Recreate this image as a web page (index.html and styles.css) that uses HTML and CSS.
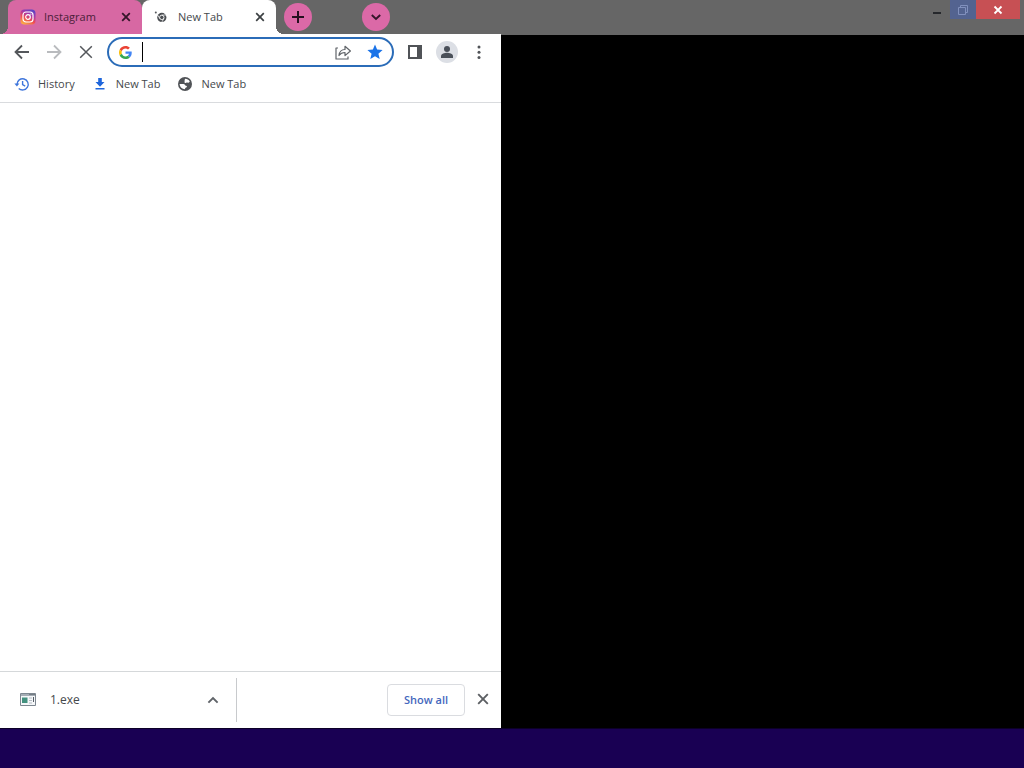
FILE: index.html
```
<!doctype html>
<html lang="en">
<head>
<meta charset="utf-8">
<title>New Tab</title>
<link rel="stylesheet" href="styles.css">
</head>

<body>
<header class="titlebar">
	<div class="tabs">
		<div class="tab tab-pink">
			<svg class="icon" viewBox="0 0 16 16">
				<defs>
					<linearGradient id="insta" x1="0.2" y1="1" x2="0.7" y2="0">
						<stop offset="0" stop-color="#fbb540"/>
						<stop offset="0.4" stop-color="#ee4b52"/>
						<stop offset="0.7" stop-color="#a837a8"/>
						<stop offset="1" stop-color="#5b45c4"/>
					</linearGradient>
				</defs>
				<rect x="0.5" y="0.5" width="15" height="15" rx="4" fill="url(#insta)"/>
				<rect x="3" y="3" width="10" height="10" rx="3" fill="none" stroke="#fff" stroke-width="1.2"/>
				<circle cx="8" cy="8" r="2.3" fill="none" stroke="#fff" stroke-width="1.2"/>
				<circle cx="10.9" cy="5.1" r="0.7" fill="#fff"/>
			</svg>
			<span class="tab-title">Instagram</span>
			<button class="tab-close" aria-label="Close tab"><svg viewBox="0 0 10 10"><path d="M1.2 1.2l7.6 7.6M8.8 1.2L1.2 8.8" stroke="#35152a" stroke-width="1.8"/></svg></button>
		</div>
		<div class="tab tab-active">
			<svg class="icon" viewBox="0 0 16 16">
				<circle cx="1.8" cy="3.6" r="1" fill="#55585c"/>
				<circle cx="7.8" cy="8.4" r="4.6" fill="#4b4e52"/>
				<circle cx="7.8" cy="8.4" r="2.2" fill="#4b4e52" stroke="#fff" stroke-width="0.9"/>
				<path d="M7.8 6h4.4M5.8 9.6L3.6 6M9.9 9.6l-2.2 3.6" stroke="#fff" stroke-width="0.7"/>
			</svg>
			<span class="tab-title">New Tab</span>
			<button class="tab-close" aria-label="Close tab"><svg viewBox="0 0 10 10"><path d="M1.2 1.2l7.6 7.6M8.8 1.2L1.2 8.8" stroke="#3c4043" stroke-width="1.7"/></svg></button>
		</div>
	</div>
	<button class="round new-tab" aria-label="New tab"><svg viewBox="0 0 28 28"><path d="M14 8v12M8 14h12" stroke="#26101f" stroke-width="2"/></svg></button>
	<button class="round tab-search" aria-label="Search tabs"><svg viewBox="0 0 28 28"><path d="M9.8 12l4.2 4 4.2-4" fill="none" stroke="#35152a" stroke-width="1.9"/></svg></button>
	<div class="win-buttons">
		<button class="win" aria-label="Minimize"><svg viewBox="0 0 16 16"><path d="M4 10h8v2H4z" fill="#26282c"/></svg></button>
		<button class="win win-restore" aria-label="Restore"><svg viewBox="0 0 16 16"><path d="M3.5 5.5h7v7h-7zM5.5 5V3.5h7v7H11" fill="none" stroke="#8190bd"/></svg></button>
		<button class="win win-close" aria-label="Close"><svg viewBox="0 0 16 16"><path d="M4.500 4.500l7 7M11.500 4.500l-7 7" stroke="#fff" stroke-width="1.8"/></svg></button>
	</div>
</header>

<main class="screen">
	<section class="browser">
		<div class="toolbar">
			<button class="tool" aria-label="Back"><svg viewBox="0 0 20 20"><path d="M17 10H4M10 3.500L3.500 10l6.500 6.500" fill="none" stroke="#54575b" stroke-width="1.8"/></svg></button>
			<button class="tool" aria-label="Forward"><svg viewBox="0 0 20 20"><path d="M3 10h13M10 3.500l6.500 6.500-6.500 6.500" fill="none" stroke="#b9bbbe" stroke-width="1.8"/></svg></button>
			<button class="tool" aria-label="Stop"><svg viewBox="0 0 20 20"><path d="M4.200 4.200l11.600 11.600M15.800 4.200L4.200 15.800" stroke="#54575b" stroke-width="1.5"/></svg></button>
			<div class="omnibox">
				<svg class="google" viewBox="0 0 48 48">
					<path fill="#ea4335" d="M24 9.500c3.540 0 6.710 1.220 9.210 3.600l6.850-6.850C35.900 2.380 30.470 0 24 0 14.620 0 6.510 5.380 2.560 13.220l7.980 6.190C12.430 13.720 17.740 9.500 24 9.500z"/>
					<path fill="#4285f4" d="M46.980 24.550c0-1.570-.15-3.090-.38-4.550H24v9.020h12.940c-.58 2.960-2.260 5.480-4.780 7.180l7.730 6c4.510-4.180 7.090-10.360 7.090-17.650z"/>
					<path fill="#fbbc05" d="M10.530 28.590c-.48-1.450-.76-2.990-.76-4.590s.27-3.140.76-4.590l-7.980-6.190C.92 16.460 0 20.120 0 24s.92 7.540 2.560 10.780l7.970-6.190z"/>
					<path fill="#34a853" d="M24 48c6.480 0 11.930-2.130 15.890-5.810l-7.730-6c-2.150 1.450-4.920 2.300-8.160 2.300-6.260 0-11.570-4.220-13.470-9.910l-7.980 6.190C6.510 42.620 14.620 48 24 48z"/>
				</svg>
				<span class="caret"></span>
				<input class="address" type="text" aria-label="Address and search bar">
				<button class="tool" aria-label="Share"><svg viewBox="0 0 20 20"><path d="M5 6H3v11h12v-2.500M6 13.500c.4-3.800 2.500-6 6-6V4.300l5.400 4.700-5.400 4.600v-3.100c-2.700 0-4.600.9-6 3z" fill="none" stroke="#5f6368" stroke-width="1.2" stroke-linejoin="round"/></svg></button>
				<button class="tool" aria-label="Edit bookmark"><svg viewBox="0 0 20 20"><path d="M10 2.600l2.100 5 5.500.5-4.200 3.600 1.300 5.400L10 14.200l-4.700 2.900 1.300-5.400-4.200-3.600 5.500-.5z" fill="#1a73e8"/></svg></button>
			</div>
			<button class="tool" aria-label="Side panel"><svg viewBox="0 0 20 20"><path d="M3 3h14v14H3zM5 5v10h7V5z" fill="#505357" fill-rule="evenodd"/></svg></button>
			<button class="tool" aria-label="Profile"><svg class="avatar" viewBox="0 0 22 22"><circle cx="11" cy="11" r="11" fill="#dcdfe5"/><circle cx="11" cy="8" r="3" fill="#4a5059"/><path d="M5 17v-2c0-2.200 3.800-3.200 6-3.200s6 1 6 3.200v2z" fill="#4a5059"/></svg></button>
			<button class="tool" aria-label="Menu"><svg viewBox="0 0 20 20"><g fill="#505357"><circle cx="10" cy="5" r="1.5"/><circle cx="10" cy="10.2" r="1.5"/><circle cx="10" cy="15.4" r="1.5"/></g></svg></button>
		</div>

		<nav class="bookmarks">
			<a class="bookmark" href="#">
				<svg class="icon" viewBox="0 0 16 16"><path d="M3 8.300a5.600 5.600 0 1 1 1.700 4.100M8.600 5v3.600l2.600 1.500" fill="none" stroke="#3f76dc" stroke-width="1.4"/><path d="M.4 7.600h5L2.900 10.600z" fill="#3f76dc"/></svg>
				<span>History</span>
			</a>
			<a class="bookmark" href="#">
				<svg class="icon" viewBox="0 0 16 16"><path d="M6.200 2h3.600v4h2.700L8 10.700 3.500 6h2.700zM3.500 12h9v1.500h-9z" fill="#1f66dc"/></svg>
				<span>New Tab</span>
			</a>
			<a class="bookmark" href="#">
				<svg class="icon" viewBox="0 0 16 16"><circle cx="8" cy="8" r="7" fill="#505357"/><path d="M8.200 2.700c1.800 0 3.700 1 4.600 2.700-.5 1.200-1.700 1.400-2.600 1.200-.8-.1-1 .5-1.800.5-.8 0-1.200-.8-.8-1.500.4-.8-.6-1.300.6-2.900zM2.600 8h3.800c1.500 0 1.500 1.600 2.600 1.800 1 .2 1.200.8.6 1.500-.6.600-1.600.3-1.600 1.900-2.900 0-5.200-2.300-5.400-5.200z" fill="#fff"/></svg>
				<span>New Tab</span>
			</a>
		</nav>

		<div class="page"></div>

		<footer class="downloads">
			<div class="download">
				<svg class="icon" viewBox="0 0 16 16"><path d="M.5 1.500h15v12H.5z" fill="#f5f7f9" stroke="#7d8790"/><path d="M1 2h14v2H1z" fill="#a5adb5"/><path d="M9.500 2.500h1m1 0h1m1 0h1" stroke="#444c55"/><path d="M2 5.500h5.500v5.500H2z" fill="#43917f"/><path d="M9 6h3M9 8.500h3M9 11h3" stroke="#b5bcc4"/><path d="M13.500 5v5" stroke="#555d66"/></svg>
				<span class="file">1.exe</span>
				<button class="tool" aria-label="Download options"><svg viewBox="0 0 20 20"><path d="M5.400 12.600L10 8l4.600 4.600" fill="none" stroke="#5f6368" stroke-width="1.9"/></svg></button>
			</div>
			<button class="show-all">Show all</button>
			<button class="tool" aria-label="Close downloads bar"><svg viewBox="0 0 20 20"><path d="M5.200 4.200l9.600 9.600M14.800 4.200l-9.600 9.600" stroke="#5c5f63" stroke-width="1.9"/></svg></button>
		</footer>
	</section>
</main>

<div class="taskbar"></div>
</body>
</html>
```

FILE: styles.css
```
*{margin:0;padding:0;box-sizing:border-box;}
body{display:flex;flex-direction:column;height:100vh;background:#000;color:#45484c;font:11px/16px "Open Sans","Noto Sans",sans-serif;overflow:hidden;}
button{display:flex;align-items:center;justify-content:center;border:0;background:none;font:inherit;color:inherit;}
svg{display:block;flex:none;}
.icon{width:16px;height:16px;}

/* title bar */
.titlebar{display:flex;align-items:flex-start;height:35px;padding:0 4px 0 8px;background:#666;}
.tabs{display:flex;}
.tab{position:relative;display:flex;align-items:center;width:134px;height:34px;padding:0 11px 0 12px;border-radius:8px 8px 0 0;}
.tab-pink{background:#d768a3;color:#4c2039;}
.tab-active{background:#fff;}
/* curved feet of the tabs */
.tab-pink:before,.tab-active:after{content:"";position:absolute;bottom:0;width:8px;height:8px;}
.tab-pink:before{left:-8px;background:radial-gradient(circle at 0 0,transparent 8px,#d768a3 8px);}
.tab-active:after{right:-8px;background:radial-gradient(circle at 100% 0,transparent 8px,#fff 8px);}
.tab-title{flex:1;margin-left:8px;}
.tab-close{width:10px;height:10px;}
.tab-close svg{width:10px;height:10px;}
.round{width:28px;height:28px;margin-top:3px;border-radius:50%;background:#db69a7;}
.round svg{width:28px;height:28px;}
.new-tab{margin-left:8px;}
.tab-search{margin-left:50px;}
.win-buttons{display:flex;margin-left:auto;}
.win{width:26px;height:19px;}
.win svg{width:16px;height:16px;}
.win-restore{background:#536390;}
.win-close{width:44px;background:#c75054;}

.screen{display:grid;flex:1;grid-template-columns:23fr 24fr;}
.browser{display:flex;flex-direction:column;margin-top:-1px;background:#fff;}
.tool{flex:none;width:32px;height:32px;}
.tool svg{width:20px;height:20px;}
.tool .avatar{width:22px;height:22px;}

.toolbar{display:flex;align-items:center;height:36px;padding:0 6px;}
.omnibox{display:flex;flex:1;align-items:center;min-width:0;height:30px;margin:0 5px;padding:0 1px 0 10px;border:2px solid #2b6cb8;border-radius:15px;background:#fff;}
.google{width:13px;height:13px;}
.caret{width:1px;height:20px;margin-left:10px;background:#000;}
.address{flex:1;min-width:0;border:0;outline:0;background:none;font:inherit;}

.bookmarks{display:flex;gap:17px;height:33px;padding:6px 14px 0;border-bottom:1px solid #d9dbde;}
.bookmark{display:flex;gap:8px;align-items:center;height:16px;color:inherit;text-decoration:none;}

.page{flex:1;}

/* downloads bar */
.downloads{display:flex;align-items:center;height:57px;padding-right:2px;border-top:1px solid #d5d8da;}
.download{display:flex;align-items:center;width:237px;height:44px;padding:0 7px 0 20px;border-right:1px solid #c8cacd;}
.file{flex:1;margin-left:14px;font-size:12px;}
.show-all{width:78px;height:32px;margin-left:auto;margin-right:2px;border:1px solid #dadce0;border-radius:4px;color:#4468bd;font-weight:600;}

.taskbar{height:40px;border-top:1px solid #0c0028;background:#190053;}
```
